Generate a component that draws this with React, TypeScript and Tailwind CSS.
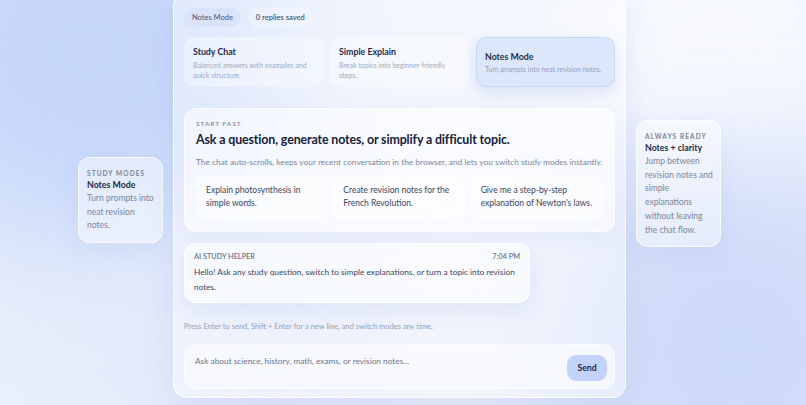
import React from "react";

const modes = [
  { title: "Study Chat", desc: "Balanced answers with examples and quick structure.", active: false },
  { title: "Simple Explain", desc: "Break topics into beginner-friendly steps.", active: false },
  { title: "Notes Mode", desc: "Turn prompts into neat revision notes.", active: true },
];

const prompts = [
  "Explain photosynthesis in simple words.",
  "Create revision notes for the French Revolution.",
  "Give me a step-by-step explanation of Newton's laws.",
];

function SideCard({ label, title, body, className }: { label: string; title: string; body: string; className?: string }) {
  return (
    <div
      className={
        "w-[85px] shrink-0 rounded-[12px] border border-white/70 bg-white/45 pb-[9px] pl-[8px] pr-[6px] pt-[11px] shadow-[0_8px_24px_rgba(120,145,210,0.12)] " +
        (className ?? "")
      }
    >
      <div className="text-[6.5px] font-bold uppercase leading-[9px] tracking-[0.17em] text-[#7b8597]">{label}</div>
      <div className="text-[8.8px] font-bold leading-[13px] text-[#1e2a44]">{title}</div>
      <p className="mt-[1px] text-[8.5px] leading-[13.7px] text-[#7a8599]">{body}</p>
    </div>
  );
}

export default function App() {
  return (
    <div
      className="relative h-[405px] w-[806px] overflow-hidden bg-[#e9effb]"
      style={{ fontFamily: 'Lato, "Noto Sans", sans-serif' }}
    >
      {/* background glow */}
      <div className="pointer-events-none absolute inset-0">
        <div className="absolute -left-[120px] -top-[140px] h-[380px] w-[420px] rounded-full bg-[#bcd0fa] opacity-80 blur-[70px]" />
        <div className="absolute -right-[60px] -top-[80px] h-[260px] w-[300px] rounded-full bg-[#f7f9fe] blur-[50px]" />
        <div className="absolute -right-[120px] top-[160px] h-[380px] w-[380px] rounded-full bg-[#c7d5f8] opacity-80 blur-[70px]" />
        <div className="absolute left-[120px] top-[220px] h-[260px] w-[300px] rounded-full bg-[#dfe7fb] blur-[60px]" />
      </div>

      <div className="relative flex items-start gap-[10px] pl-[78px]">
        <SideCard
          className="mt-[157px]"
          label="Study Modes"
          title="Notes Mode"
          body="Turn prompts into neat revision notes."
        />

        {/* main panel */}
        <div className="-mt-[8px] flex h-[406px] w-[453px] shrink-0 flex-col rounded-[14px] border border-white/80 bg-white/45 px-[10px] pt-[15px] shadow-[0_10px_30px_rgba(110,135,200,0.12)]">
          <div className="flex items-center gap-[7px]">
            <span className="rounded-full bg-[#d9e4fb] px-[8px] py-[4px] text-[7.5px] leading-[11px] text-[#4b5670]">Notes Mode</span>
            <span className="rounded-full bg-white/25 px-[8px] py-[4px] text-[7.5px] font-semibold leading-[11px] text-[#4b5670]">
              0 replies saved
            </span>
          </div>

          <div className="mt-[10px] grid grid-cols-3 gap-[7px]">
            {modes.map((m) =>
              m.active ? (
                <div
                  key={m.title}
                  className="flex h-[50px] flex-col justify-center rounded-[10px] border border-[#c9d7f7] bg-[#dde7fc] px-[8px] shadow-[0_6px_16px_rgba(110,140,220,0.2)]"
                >
                  <div className="text-[8.8px] font-bold leading-[13px] text-[#1e2a44]">{m.title}</div>
                  <div className="mt-[1px] text-[7px] leading-[10px] text-[#95a0b5]">{m.desc}</div>
                </div>
              ) : (
                <div key={m.title} className="h-[50px] rounded-[10px] bg-white/35 px-[9px] pt-[8px]">
                  <div className="text-[8.8px] font-bold leading-[13px] text-[#1e2a44]">{m.title}</div>
                  <div className="mt-[2px] text-[7px] leading-[10px] text-[#a1abbe]">{m.desc}</div>
                </div>
              )
            )}
          </div>

          <div className="mt-[21px] rounded-[12px] border border-white/70 bg-white/50 px-[11px] pb-[11px] pt-[10px] shadow-[0_6px_20px_rgba(110,135,200,0.08)]">
            <div className="text-[6.5px] font-semibold uppercase leading-[9px] tracking-[0.15em] text-[#7b8597]">Start fast</div>
            <h1 className="mt-[3px] text-[12.4px] font-bold leading-[17px] tracking-[-0.01em] text-[#16213a]">
              Ask a question, generate notes, or simplify a difficult topic.
            </h1>
            <p className="mt-[8px] whitespace-nowrap text-[8.35px] leading-[12px] text-[#7a8599]">
              The chat auto-scrolls, keeps your recent conversation in the browser, and lets you switch study modes instantly.
            </p>
            <div className="mt-[8px] grid grid-cols-3 gap-[5px]">
              {prompts.map((p) => (
                <div key={p} className="h-[44px] rounded-[9px] bg-white/45 px-[10px] pt-[8px] text-[8.5px] leading-[13px] text-[#3b4560]">
                  {p}
                </div>
              ))}
            </div>
          </div>

          <div className="mt-[11px] w-[346px] rounded-[12px] border border-white/70 bg-white/55 px-[8px] pb-[7px] pt-[8px] shadow-[0_8px_22px_rgba(110,135,200,0.13)]">
            <div className="flex items-center justify-between pl-[1px] pr-[1px] text-[7.3px] font-semibold leading-[10px] text-[#6b7588]">
              <span>AI STUDY HELPER</span>
              <span>7:04 PM</span>
            </div>
            <p className="mt-[3px] pl-[1px] text-[8.3px] leading-[15px] text-[#3b4560]">
              Hello! Ask any study question, switch to simple explanations, or turn a topic into revision notes.
            </p>
          </div>

          <p className="mt-[19px] text-[7.5px] leading-[10px] text-[#95a0b5]">
            Press Enter to send, Shift + Enter for a new line, and switch modes any time.
          </p>

          <div className="mt-[12px] flex h-[45px] items-start justify-between rounded-[12px] border border-white/70 bg-white/50 pl-[10px] pr-[7px] pt-[10px]">
            <span className="text-[8.3px] leading-[12px] text-[#6b7588]">Ask about science, history, math, exams, or revision notes...</span>
            <button className="h-[26px] w-[40px] rounded-[9px] bg-[#c3d3fb] text-[8.7px] font-bold text-[#1e2a44]">Send</button>
          </div>
        </div>

        <SideCard
          className="mt-[120px]"
          label="Always ready"
          title="Notes + clarity"
          body="Jump between revision notes and simple explanations without leaving the chat flow."
        />
      </div>
    </div>
  );
}
